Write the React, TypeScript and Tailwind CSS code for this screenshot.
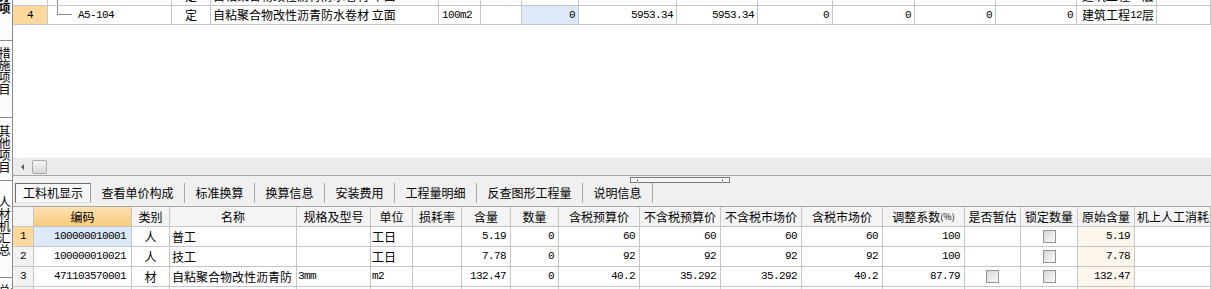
import React from "react";

const mono = "font-['Liberation_Mono',monospace] text-[11px] tracking-[-0.6px]";

function C({ children, className = "" }: { children?: React.ReactNode; className?: string }) {
  return (
    <div
      className={`flex items-center overflow-hidden whitespace-nowrap border-r border-b border-[#c6c6c6] ${className}`}
    >
      {children}
    </div>
  );
}

function N({ v, className = "" }: { v: string; className?: string }) {
  return (
    <C className={`justify-end pr-[3px] ${className}`}>
      <span className={mono}>{v}</span>
    </C>
  );
}

function N2({ v, className = "" }: { v: string; className?: string }) {
  return (
    <C className={`justify-end pr-[4px] ${className}`}>
      <span className={mono}>{v}</span>
    </C>
  );
}

function Box() {
  return (
    <span className="block h-[13px] w-[13px] border border-[#949494] bg-linear-to-br from-[#d6d6d6] to-[#fbfbfb]" />
  );
}

const TOP =
  "grid grid-cols-[35px_124px_39px_228px_42px_41px_57px_98px_81px_75px_82px_81px_81px_80px_1fr]";
const BOT =
  "grid grid-cols-[21px_98px_38px_127px_74px_42px_49px_49px_48px_81px_81px_81px_81px_82px_56px_57px_57px_1fr]";

function TopRow({ n, code, name, clip }: { n: string; code: string; name: string; clip?: boolean }) {
  return (
    <div className={`${TOP} h-[19px] ${clip ? "-mt-[13px]" : ""}`}>
      <C className={`justify-center ${clip ? "bg-white" : "bg-[#fdd89c]"}`}>
        <span className={mono}>{n}</span>
      </C>
      <C className="relative pl-[30px]">
        {clip ? (
          <span className="absolute left-[9px] top-0 bottom-0 border-l border-[#8c8c8c]" />
        ) : (
          <span className="absolute left-[9px] top-0 h-[9px] w-[15px] border-l border-b border-[#8c8c8c]" />
        )}
        <span className={mono}>{code}</span>
      </C>
      <C className="justify-center">定</C>
      <C className="pl-[2px]">{name}</C>
      <C className="pl-[3px]">
        <span className={mono}>100m2</span>
      </C>
      <C />
      <N v="0" className={clip ? "" : "bg-[#dce9f8]"} />
      <N v="5953.34" />
      <N v="5953.34" />
      <N v="0" />
      <N v="0" />
      <N v="0" />
      <N v="0" />
      <C className="pl-[5px]">
        建筑工程<span className={mono}>12</span>层
      </C>
      <C />
    </div>
  );
}

type BRow = {
  n: string;
  code: string;
  cat: string;
  name: string;
  spec: string;
  unit: string;
  monoUnit?: boolean;
  qty: string;
  p1: string;
  p2: string;
  p3: string;
  p4: string;
  adj: string;
  est: boolean;
  orig: string;
};

const rows: BRow[] = [
  { n: "1", code: "100000010001", cat: "人", name: "普工", spec: "", unit: "工日", qty: "5.19", p1: "60", p2: "60", p3: "60", p4: "60", adj: "100", est: false, orig: "5.19" },
  { n: "2", code: "100000010021", cat: "人", name: "技工", spec: "", unit: "工日", qty: "7.78", p1: "92", p2: "92", p3: "92", p4: "92", adj: "100", est: false, orig: "7.78" },
  { n: "3", code: "471103570001", cat: "材", name: "自粘聚合物改性沥青防", spec: "3mm", unit: "m2", monoUnit: true, qty: "132.47", p1: "40.2", p2: "35.292", p3: "35.292", p4: "40.2", adj: "87.79", est: true, orig: "132.47" },
];

const heads = ["", "编码", "类别", "名称", "规格及型号", "单位", "损耗率", "含量", "数量", "含税预算价", "不含税预算价", "不含税市场价", "含税市场价", "调整系数(%)", "是否暂估", "锁定数量", "原始含量"];

const tabs = ["查看单价构成", "标准换算", "换算信息", "安装费用", "工程量明细", "反查图形工程量", "说明信息"];

function VTab({ text, h, bold, top }: { text: string; h: string; bold?: boolean; top?: string }) {
  return (
    <div className={`${h} shrink-0 overflow-hidden border-t border-[#8a8a8a] flex justify-start`}>
      <span
        className={`${top ?? "mt-[8px]"} -ml-[2px] [writing-mode:vertical-rl] text-[12px] leading-[12px] text-black ${bold ? "font-bold" : ""}`}
      >
        {text}
      </span>
    </div>
  );
}

export default function App() {
  return (
    <div className="flex h-[289px] w-[1211px] overflow-hidden bg-white font-['Noto_Sans_CJK_SC',sans-serif] text-[12px] leading-none text-black">
      {/* left vertical tabs */}
      <div className="flex w-[13px] shrink-0 flex-col border-r border-[#8c8c8c] bg-[#fbfbfb]">
        <div className="flex h-[40px] shrink-0 overflow-hidden">
          <span className="-mt-[34px] -ml-[2px] [writing-mode:vertical-rl] text-[12px] leading-[12px] font-bold">分部分项</span>
        </div>
        <VTab text="措施项目" h="h-[77px]" top="mt-[6px]" />
        <VTab text="其他项目" h="h-[63px]" top="mt-[7px]" />
        <VTab text="人材机汇总" h="h-[97px]" top="mt-[15px]" />
        <VTab text="费用汇总" h="h-[20px]" top="mt-[6px]" />
      </div>

      {/* main */}
      <div className="flex min-w-0 flex-1 flex-col *:shrink-0">
        <TopRow n="3" code="A5-103" name="自粘聚合物改性沥青防水卷材 平面" clip />
        <TopRow n="4" code="A5-104" name="自粘聚合物改性沥青防水卷材 立面" />
        <div className="h-[132px] bg-white" />

        {/* horizontal scrollbar */}
        <div className="flex h-[19px] items-center border-t border-[#f7f7f7] border-b border-b-[#a6a6a6] bg-[#ececec] pl-[8px]">
          <span className="block h-0 w-0 border-y-[3px] border-r-[3px] border-y-transparent border-r-[#5a5a5a]" />
          <span className="ml-[8px] block h-[14px] w-[15px] rounded-[2px] border border-[#a9a9a9] bg-linear-to-b from-[#f6f6f6] to-[#d8d8d8]" />
        </div>

        {/* tab bar */}
        <div className="relative flex h-[31px] items-start border-b border-[#a8a8a8] bg-[#f0f0f0] pl-[2px] pt-[7px]">
          <div className="flex h-[20px] w-[76px] items-center justify-center border border-t-[#6e6e6e] border-l-[#6e6e6e] border-r-[#9a9a9a] border-b-[#e2e2e2] bg-[#f8f8f8]">
            工料机显示
          </div>
          {tabs.map((t) => (
            <React.Fragment key={t}>
              <div className="flex h-[20px] items-center px-[10.5px]">{t}</div>
              <span className="block h-[20px] w-px bg-[#a8a8a8]" />
            </React.Fragment>
          ))}
          <div className="absolute left-[617px] top-[1px] flex h-[6px] w-[100px] items-center justify-between border border-[#7a7a7a] bg-[#f6f6f6] px-[6px]">
            <span className="block h-px w-px bg-black" />
            <span className="block h-px w-px bg-black" />
          </div>
        </div>

        {/* bottom grid header */}
        <div className={`${BOT} h-[20px] bg-[#f4f4f4]`}>
          {heads.map((h, i) => (
            <C
              key={i}
              className={`justify-center ${i === 1 ? "bg-linear-to-b from-[#fde2b2] to-[#f9ca7c]" : ""}`}
            >
              {h === "调整系数(%)" ? (
                <>
                  调整系数<span className="text-[9px]">(%)</span>
                </>
              ) : (
                h
              )}
            </C>
          ))}
          <C className="pl-[2px]">机上人工消耗量</C>
        </div>

        {rows.map((r) => (
          <div key={r.n} className={`${BOT} h-[20px]`}>
            <C className={`justify-center ${r.n === "1" ? "bg-[#fdd89c]" : "bg-[#f3f3f3]"}`}>
              <span className={mono}>{r.n}</span>
            </C>
            <C className={`justify-end pr-[5px] ${r.n === "1" ? "bg-[#dce9f8]" : ""}`}>
              <span className={mono}>{r.code}</span>
            </C>
            <C className="justify-center">{r.cat}</C>
            <C className="pl-[2px]">{r.name}</C>
            <C className="pl-[1px]">
              <span className={mono}>{r.spec}</span>
            </C>
            <C className="pl-[1px]">{r.monoUnit ? <span className={mono}>{r.unit}</span> : r.unit}</C>
            <C />
            <N2 v={r.qty} />
            <N2 v="0" />
            <N2 v={r.p1} />
            <N2 v={r.p2} />
            <N2 v={r.p3} />
            <N2 v={r.p4} />
            <N2 v={r.adj} />
            <C className="justify-center">{r.est ? <Box /> : null}</C>
            <C className="justify-center">
              <Box />
            </C>
            <N2 v={r.orig} className="bg-[#fdf6ec]" />
            <C />
          </div>
        ))}
        <div className={`${BOT} h-[20px]`}>
          <C className="justify-center bg-[#f3f3f3]">
            <span className={mono}>4</span>
          </C>
          {Array.from({ length: 15 }).map((_, i) => (
            <C key={i} />
          ))}
          <C className="bg-[#fdf6ec]" />
          <C />
        </div>
      </div>
    </div>
  );
}
